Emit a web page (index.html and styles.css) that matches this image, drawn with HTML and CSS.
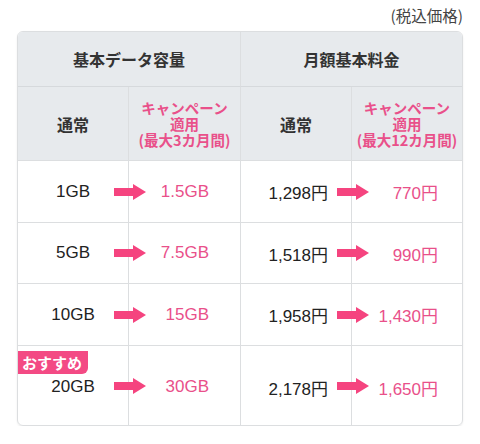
FILE: index.html
```html
<!DOCTYPE html>
<html lang="ja">
<head>
<meta charset="utf-8">
<link rel="stylesheet" href="styles.css">
</head>
<body>
<div class="page">
  <p class="note">(税込価格)</p>
  <div class="table">
    <div class="cell head h1 span2">基本データ容量</div>
    <div class="cell head h1 span2 last">月額基本料金</div>

    <div class="cell head h2">通常</div>
    <div class="cell head h2 pink">キャンペーン<br>適用<br>(最大3カ月間)</div>
    <div class="cell head h2">通常</div>
    <div class="cell head h2 pink last">キャンペーン<br>適用<br>(最大12カ月間)</div>

    <div class="cell row c1">1GB</div>
    <div class="cell row c2"><span class="arrow"></span>1.5GB</div>
    <div class="cell row c3">1,298円</div>
    <div class="cell row c4 last"><span class="arrow"></span>770円</div>

    <div class="cell row c1 r2">5GB</div>
    <div class="cell row c2 r2"><span class="arrow"></span>7.5GB</div>
    <div class="cell row c3 r2">1,518円</div>
    <div class="cell row c4 r2 last"><span class="arrow"></span>990円</div>

    <div class="cell row c1">10GB</div>
    <div class="cell row c2"><span class="arrow"></span>15GB</div>
    <div class="cell row c3">1,958円</div>
    <div class="cell row c4 last"><span class="arrow"></span>1,430円</div>

    <div class="cell row c1 final"><span class="badge">おすすめ</span>20GB</div>
    <div class="cell row c2 final"><span class="arrow"></span>30GB</div>
    <div class="cell row c3 final">2,178円</div>
    <div class="cell row c4 final last"><span class="arrow"></span>1,650円</div>
  </div>
</div>
</body>
</html>
```

FILE: styles.css
```css
* { box-sizing: border-box; }
body {
  margin: 0;
  background: #fff;
  font-family: "Liberation Sans", "Noto Sans CJK JP", sans-serif;
  color: #222;
}
.page {
  padding: 4px 17px 0 17px;
  width: 480px;
}
.note {
  margin: 0 0 5px 0;
  text-align: right;
  font-family: "Noto Sans CJK JP", sans-serif;
  font-size: 15.5px;
  line-height: 22px;
  color: #444;
}
.table {
  width: 446px;
  display: grid;
  grid-template-columns: 111px 112px 111px 110px;
  border: 1px solid #dcdee0;
  border-radius: 6px;
  overflow: hidden;
  box-shadow: 0 1px 2px rgba(0,0,0,0.08);
}
.cell {
  position: relative;
  display: flex;
  align-items: center;
  border-right: 1px solid #dcdee0;
  border-bottom: 1px solid #dcdee0;
}
.cell.last { border-right: none; }
.span2 { grid-column: span 2; }
.head {
  background: #e7eaed;
  justify-content: center;
  text-align: center;
  font-weight: bold;
  color: #333;
  font-family: "Noto Sans CJK JP", sans-serif;
}
.h1 {
  height: 55px;
  font-size: 16px;
  border-bottom-color: #d6d9dc;
}
.h2 {
  height: 74px;
  font-size: 16px;
}
.head.pink {
  color: #e9508a;
  font-size: 14.5px;
  line-height: 16px;
}
.row {
  height: 62px;
  font-size: 17px;
}
.row.r2 { height: 61px; }
.row.final {
  height: 79px;
  border-bottom: none;
  padding-top: 3px;
}
.c1 { justify-content: center; }
.c2 { justify-content: flex-end; padding-right: 31px; color: #e9508a; }
.c3 { justify-content: flex-end; padding-right: 23px; }
.c4 { justify-content: flex-end; padding-right: 24px; color: #e9508a; }
.arrow {
  position: absolute;
  left: -15px;
  top: 50%;
  margin-top: -8px;
  width: 32px;
  height: 16px;
}
.arrow::before {
  content: "";
  position: absolute;
  left: 0;
  top: 4px;
  width: 20px;
  height: 8px;
  background: #f5447f;
}
.arrow::after {
  content: "";
  position: absolute;
  left: 19px;
  top: 0;
  border-left: 13px solid #f5447f;
  border-top: 8px solid transparent;
  border-bottom: 8px solid transparent;
}
.badge {
  position: absolute;
  left: 0;
  top: 5px;
  height: 23px;
  padding: 0 6px 0 4px;
  background: #f34a84;
  color: #fff;
  font-family: "Noto Sans CJK JP", sans-serif;
  font-weight: bold;
  font-size: 15px;
  line-height: 23px;
  border-radius: 0 0 6px 0;
}
```
